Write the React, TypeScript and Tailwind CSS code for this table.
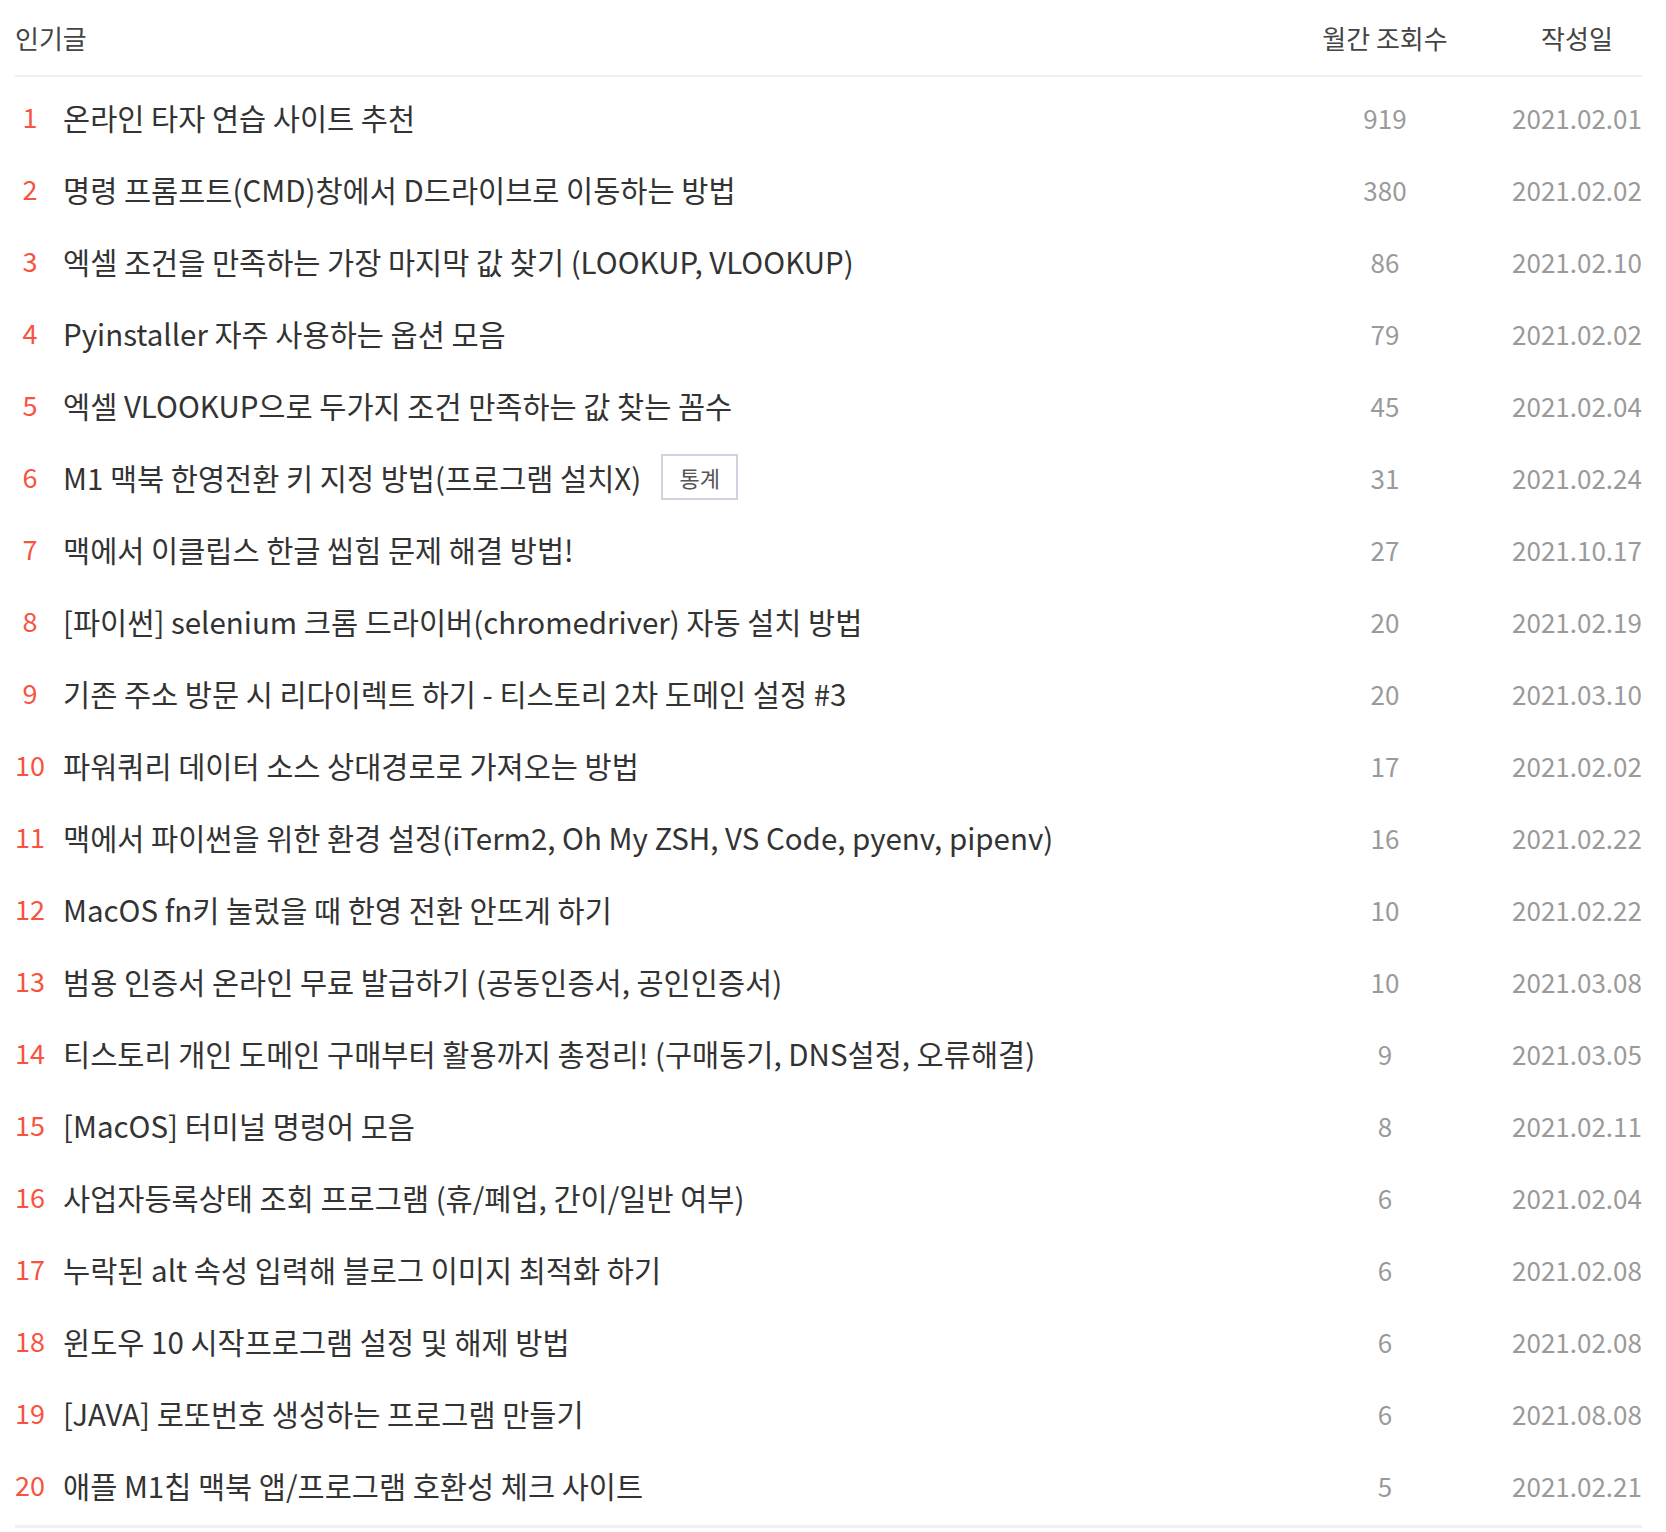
const posts = [
  { title: "온라인 타자 연습 사이트 추천", views: "919", date: "2021.02.01" },
  { title: "명령 프롬프트(CMD)창에서 D드라이브로 이동하는 방법", views: "380", date: "2021.02.02" },
  { title: "엑셀 조건을 만족하는 가장 마지막 값 찾기 (LOOKUP, VLOOKUP)", views: "86", date: "2021.02.10" },
  { title: "Pyinstaller 자주 사용하는 옵션 모음", views: "79", date: "2021.02.02" },
  { title: "엑셀 VLOOKUP으로 두가지 조건 만족하는 값 찾는 꼼수", views: "45", date: "2021.02.04" },
  { title: "M1 맥북 한영전환 키 지정 방법(프로그램 설치X)", views: "31", date: "2021.02.24", stat: true },
  { title: "맥에서 이클립스 한글 씹힘 문제 해결 방법!", views: "27", date: "2021.10.17" },
  { title: "[파이썬] selenium 크롬 드라이버(chromedriver) 자동 설치 방법", views: "20", date: "2021.02.19" },
  { title: "기존 주소 방문 시 리다이렉트 하기 - 티스토리 2차 도메인 설정 #3", views: "20", date: "2021.03.10" },
  { title: "파워쿼리 데이터 소스 상대경로로 가져오는 방법", views: "17", date: "2021.02.02" },
  { title: "맥에서 파이썬을 위한 환경 설정(iTerm2, Oh My ZSH, VS Code, pyenv, pipenv)", views: "16", date: "2021.02.22" },
  { title: "MacOS fn키 눌렀을 때 한영 전환 안뜨게 하기", views: "10", date: "2021.02.22" },
  { title: "범용 인증서 온라인 무료 발급하기 (공동인증서, 공인인증서)", views: "10", date: "2021.03.08" },
  { title: "티스토리 개인 도메인 구매부터 활용까지 총정리! (구매동기, DNS설정, 오류해결)", views: "9", date: "2021.03.05" },
  { title: "[MacOS] 터미널 명령어 모음", views: "8", date: "2021.02.11" },
  { title: "사업자등록상태 조회 프로그램 (휴/폐업, 간이/일반 여부)", views: "6", date: "2021.02.04" },
  { title: "누락된 alt 속성 입력해 블로그 이미지 최적화 하기", views: "6", date: "2021.02.08" },
  { title: "윈도우 10 시작프로그램 설정 및 해제 방법", views: "6", date: "2021.02.08" },
  { title: "[JAVA] 로또번호 생성하는 프로그램 만들기", views: "6", date: "2021.08.08" },
  { title: "애플 M1칩 맥북 앱/프로그램 호환성 체크 사이트", views: "5", date: "2021.02.21" },
];

export default function App() {
  return (
    <div className="bg-white pl-[15px] pr-[24px] font-['Noto_Sans_CJK_KR',sans-serif]">
      <div className="flex h-[77px] items-center border-b-2 border-[#efeff4] text-[26px] text-[#444]">
        <div className="flex-1">인기글</div>
        <div className="w-[130px] text-center">월간 조회수</div>
        <div className="w-[62px]" />
        <div className="w-[130px] text-center">작성일</div>
      </div>
      <ul className="border-b-[3px] border-[#efeff4] pt-[4px] pb-[4px]">
        {posts.map((p, i) => (
          <li key={i} className="flex h-[72px] items-center">
            <span className="w-[30px] text-center text-[27px] text-[#f75341]">{i + 1}</span>
            <div className="ml-[18px] flex flex-1 items-center">
              <span className="whitespace-nowrap text-[29.5px] text-[#333]">{p.title}</span>
              {p.stat && (
                <span className="ml-[20px] flex h-[46px] w-[77px] items-center justify-center border-2 border-[#cdd4de] text-[22px] text-[#555]">
                  통계
                </span>
              )}
            </div>
            <span className="w-[130px] text-center text-[26px] text-[#9a9a9a]">{p.views}</span>
            <div className="w-[62px]" />
            <span className="w-[130px] text-center text-[26px] text-[#9a9a9a]">{p.date}</span>
          </li>
        ))}
      </ul>
    </div>
  );
}
